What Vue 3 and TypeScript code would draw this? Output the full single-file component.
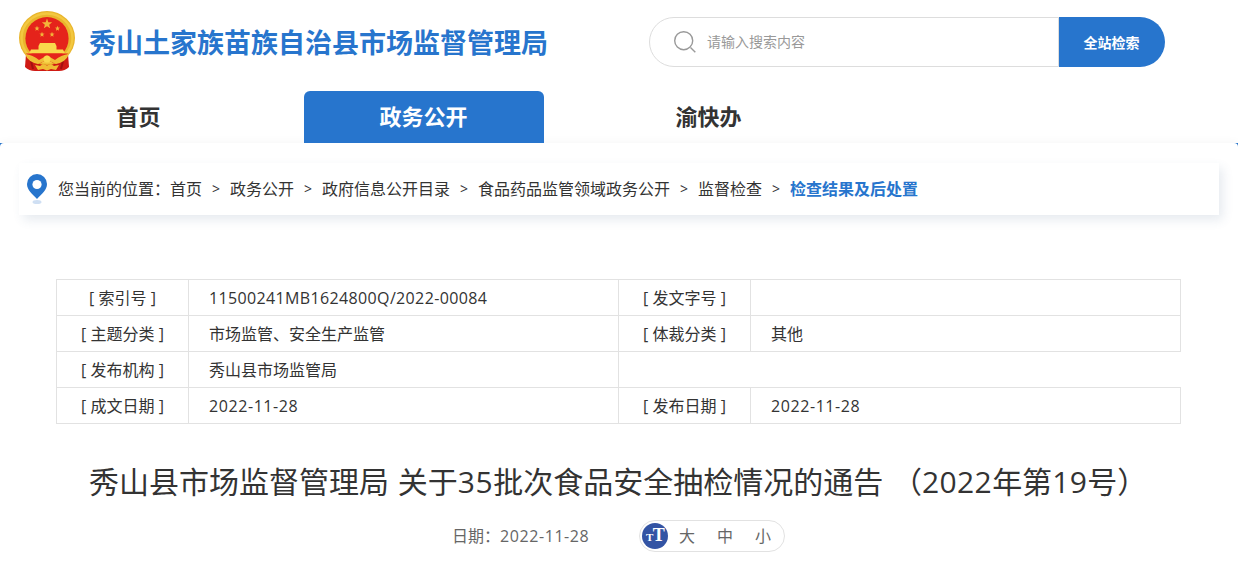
<script setup lang="ts">
import { ref } from 'vue'

interface Cell {
  label: string
  value: string
  kind?: string
}

const keyword = ref('')
const active  = ref('政务公开')
const size    = ref('')

const nav    = ['首页', '政务公开', '渝快办']
const crumbs = ['首页', '政务公开', '政府信息公开目录', '食品药品监管领域政务公开', '监督检查', '检查结果及后处置']
const sizes  = ['大', '中', '小']

const rows: Cell[][] = [
  [{ label: '索引号', value: '11500241MB1624800Q/2022-00084', kind: 'code' }, { label: '发文字号', value: '' }],
  [{ label: '主题分类', value: '市场监管、安全生产监管' }, { label: '体裁分类', value: '其他' }],
  [{ label: '发布机构', value: '秀山县市场监管局' }],
  [{ label: '成文日期', value: '2022-11-28', kind: 'num' }, { label: '发布日期', value: '2022-11-28', kind: 'num' }],
]

// stars on the emblem: x, y, radius
const stars = [
  [28, 13, 5.4],
  [18, 17.5, 2.7],
  [38.5, 17.5, 2.7],
  [23, 23.5, 2.7],
  [33, 23.5, 2.7],
]

function starPoints([cx, cy, r]: number[]) {
  return Array.from({ length: 10 }, (_, i) => {
    const a = (Math.PI / 5) * i - Math.PI / 2
    const d = i % 2 ? r * 0.42 : r
    return `${(cx + d * Math.cos(a)).toFixed(2)},${(cy + d * Math.sin(a)).toFixed(2)}`
  }).join(' ')
}
</script>

<template>
  <div class="page">
    <header class="header">
      <div class="top">
        <svg class="emblem" viewBox="0 0 56 60">
          <path d="M7 43 L6 56 Q10 60 16 60 H40 Q46 60 50 56 L49 43Z" fill="#cf1a14" />
          <path d="M12 50 L14 58 M44 50 L42 58" stroke="#a50f10" stroke-width="2" />
          <ellipse cx="28" cy="27" rx="28" ry="27" fill="#e9b52c" />
          <ellipse cx="28" cy="27" rx="25.5" ry="24.5" fill="none" stroke="#f3c840" stroke-width="2.4" />
          <ellipse cx="28" cy="27.5" rx="21.6" ry="21.5" fill="#e5231b" />
          <polygon v-for="(s, i) in stars" :key="i" :points="starPoints(s)" fill="#f3b53a" />
          <path d="M21 32h15l1.5 3h-18z M19.500 35h18v4h-18z M12 38.500h32l2 4H10z" fill="#f9d84c" />
          <path d="M7 42.500h42l-3 5q-5 4-11 5l-7-4-7 4q-8-1-11-5z" fill="#e5231b" />
          <path d="M6 43q8 1 14 6l8-4.500 8 4.500q6-5 14-6-3 8-13 10l-9-4-9 4q-10-2-13-10z" fill="#efbd35" />
          <circle cx="28" cy="48" r="3.500" fill="#f9d84c" />
          <path d="M16 54l5 1 3-2 4 1.500 4-1.500 3 2 5-1-3 5-5-1-4 1.500-4-1.500-5 1z" fill="#f0bc34" />
        </svg>
        <h1 class="site-name">秀山土家族苗族自治县市场监督管理局</h1>
        <form class="search" @submit.prevent>
          <label class="search-box">
            <svg class="search-icon" viewBox="0 0 22 22">
              <circle cx="9.700" cy="9.700" r="9" />
              <path d="M16.500 16.500l4.800 4.800" />
            </svg>
            <input v-model="keyword" class="search-input" type="text" placeholder="请输入搜索内容">
          </label>
          <button class="search-button" type="submit">全站检索</button>
        </form>
      </div>
      <nav class="nav">
        <a
          v-for="item in nav"
          :key="item"
          class="nav-item"
          :class="{ active: item === active }"
          @click="active = item"
        >{{ item }}</a>
      </nav>
    </header>

    <div class="backdrop">
      <main class="main">
        <div class="crumbs">
          <svg class="pin" viewBox="0 0 20 30">
            <ellipse cx="10" cy="28" rx="4.500" ry="2" fill="#cfdff3" />
            <path d="M10 0a10 10 0 0 1 10 10c0 6-5 9.500-10 15C5 19.500 0 16 0 10A10 10 0 0 1 10 0z" fill="#2775cd" />
            <circle cx="10" cy="10.500" r="4.600" fill="#fff" />
          </svg>
          <span>您当前的位置：</span>
          <template v-for="(crumb, i) in crumbs" :key="crumb">
            <span v-if="i" class="sep">&gt;</span>
            <a :class="{ current: i === crumbs.length - 1 }">{{ crumb }}</a>
          </template>
        </div>

        <table class="info">
          <colgroup>
            <col class="col-label"><col class="col-value"><col class="col-label"><col class="col-value">
          </colgroup>
          <tbody>
            <tr v-for="(row, i) in rows" :key="i">
              <template v-for="cell in row" :key="cell.label">
                <th>[ {{ cell.label }} ]</th>
                <td :class="cell.kind">{{ cell.value }}</td>
              </template>
            </tr>
          </tbody>
        </table>

        <h2 class="title">秀山县市场监督管理局 关于<span class="num">35</span>批次食品安全抽检情况的通告 （<span class="code">2022</span>年第<span class="code">19</span>号）</h2>

        <div class="meta">
          <span class="date">日期：<span class="num">2022-11-28</span></span>
          <div class="sizes">
            <span class="size-icon"><small>T</small>T</span>
            <a v-for="s in sizes" :key="s" @click="size = s">{{ s }}</a>
          </div>
        </div>
      </main>
    </div>
  </div>
</template>

<style>
body {
  margin:     0;
  background: #fff;
  overflow:   hidden;
}
</style>

<style scoped>
.page {
  height:      562px;
  overflow:    hidden;
  color:       #333;
  font-family: "Open Sans", "Noto Sans CJK SC", sans-serif;
  font-size:   16px;
}

.num  { letter-spacing: 0.58px; }
.code { letter-spacing: 0.36px; }

.header {
  width:  1200px;
  height: 143px;
  margin: 0 auto;
}

.top {
  display:     flex;
  align-items: flex-start;
  height:      91px;
}

.emblem {
  width:      56px;
  height:     60px;
  margin-top: 11px;
}

.site-name {
  width:       560px;
  margin:      23px 0 0 14px;
  font-size:   27px;
  line-height: 40px;
  font-weight: 700;
  color:       #2775cd;
}

.search {
  display:    flex;
  width:      516px;
  height:     50px;
  margin-top: 17px;
}

.search-box {
  box-sizing:    border-box;
  display:       flex;
  align-items:   center;
  width:         410px;
  padding-left:  24px;
  border:        1px solid #ddd;
  border-radius: 25px 0 0 25px;
}

.search-icon {
  width:        22px;
  height:       22px;
  fill:         none;
  stroke:       #999;
  stroke-width: 1.4;
}

.search-input {
  flex:        1;
  min-width:   0;
  height:      38px;
  margin-left: 11px;
  padding:     0 0 2px;
  border:      0;
  outline:     0;
  background:  transparent;
  font:        14px "Noto Sans CJK SC", sans-serif;
}

.search-input::placeholder { color: #999; }

.search-button {
  width:         106px;
  padding:       0 1px 0 0;
  border:        0;
  border-radius: 0 25px 25px 0;
  background:    #2775cd;
  color:         #fff;
  font:          700 14px "Noto Sans CJK SC", sans-serif;
}

.nav {
  display: flex;
  gap:     45px;
}

.nav-item {
  box-sizing:    border-box;
  width:         240px;
  height:        52px;
  padding-right: 1px;
  border-radius: 6px 6px 0 0;
  font-size:     22px;
  line-height:   51px;
  font-weight:   700;
  text-align:    center;
  cursor:        pointer;
}

.nav-item.active {
  position:   relative;
  z-index:    1;
  background: #2775cd;
  color:      #fff;
}

.backdrop {
  height:     419px;
  background: linear-gradient(#2775cd 6px, #fff 6px);
}

.main {
  box-sizing:    border-box;
  height:        419px;
  padding:       20px 19px 0;
  border-radius: 4px 4px 0 0;
  background:    #fff;
  box-shadow:    0 0 10px rgba(0, 0, 0, 0.05);
}

.crumbs {
  display:     flex;
  align-items: center;
  height:      52px;
  box-shadow:  4px 5px 10px rgba(60, 90, 130, 0.12);
  line-height: 52px;
}

.pin {
  width:  20px;
  height: 30px;
  margin: 0 11px 0 8px;
}

.sep {
  width:      28px;
  font-size:  14px;
  text-align: center;
}

.current {
  color:       #2775cd;
  font-weight: 700;
}

.info {
  width:           1125px;
  margin:          64px 0 0 37px;
  border-collapse: collapse;
  table-layout:    fixed;
}

.col-label { width: 132px; }
.col-value { width: 430px; }

.info th,
.info td {
  box-sizing:  border-box;
  height:      36px;
  padding:     2px 0 0;
  border:      1px solid #e2e2e2;
  font-weight: 400;
  line-height: 33px;
}

.info td { padding-left: 20px; }

.title {
  margin:       35px 0 0 70px;
  font-size:    30px;
  line-height:  46px;
  font-weight:  400;
  white-space:  nowrap;
  word-spacing: 1px;
}

.meta {
  display:     flex;
  align-items: center;
  margin:      15px 0 0 433px;
  line-height: 32px;
  color:       #666;
}

.date { width: 187px; }

.sizes {
  box-sizing:    border-box;
  display:       flex;
  align-items:   center;
  gap:           22px;
  width:         146px;
  height:        32px;
  padding-left:  2px;
  border:        1px solid #e2e2e2;
  border-radius: 16px;
}

.sizes a { cursor: pointer; }

.size-icon {
  width:          26px;
  height:         26px;
  margin-right:   -11px;
  border-radius:  50%;
  background:     #3354a4;
  color:          #fff;
  font:           700 18px/25px "Liberation Serif", serif;
  letter-spacing: -0.8px;
  text-align:     center;
}

.size-icon small { font-size: 11px; }
</style>
